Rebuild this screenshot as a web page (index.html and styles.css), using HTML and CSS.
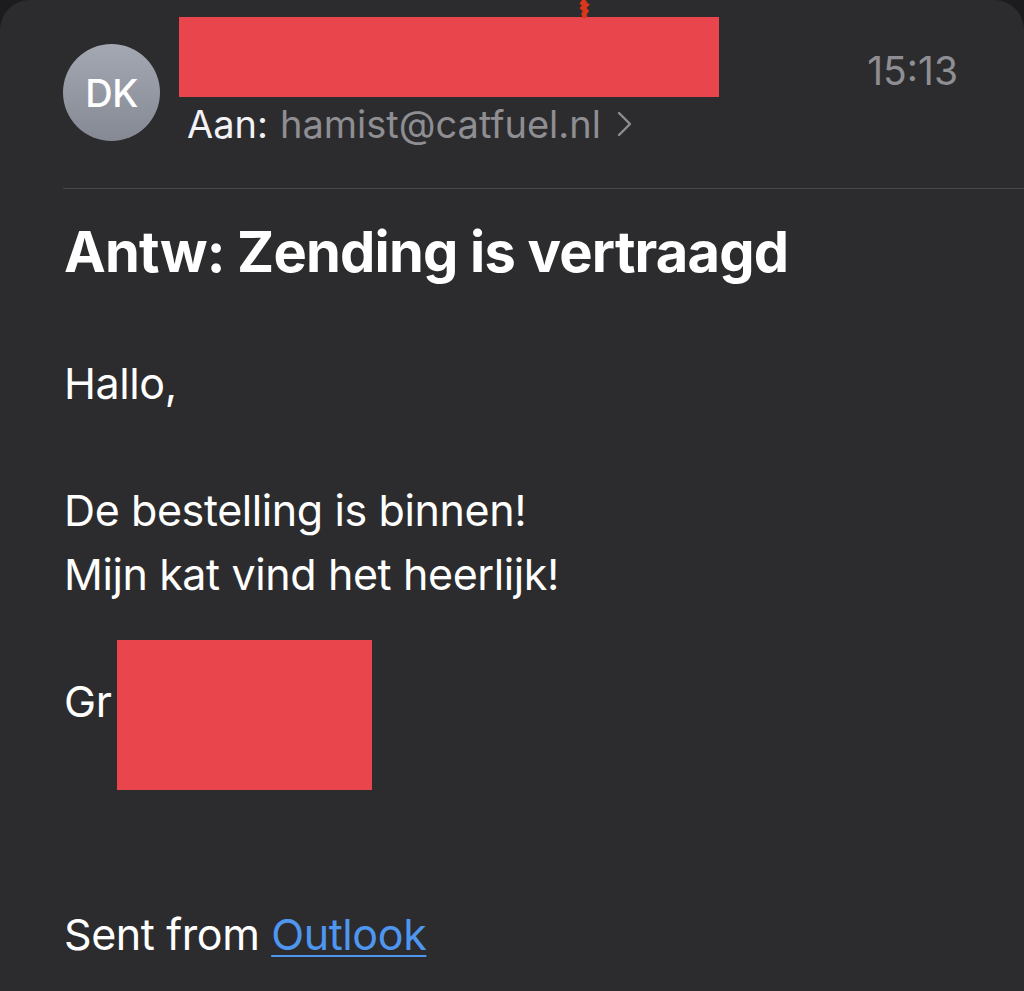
FILE: index.html
```html
<!DOCTYPE html>
<html>
<head>
  <meta charset="UTF-8">
  <title>Antw: Zending is vertraagd</title>
  <link rel="stylesheet" href="styles.css">
</head>
<body>

  <div class="mail">
    <svg class="scribble" width="14" height="18" viewBox="0 0 14 18">
      <path d="M7 0 L5 3 L8 5 L5 8 L8 11 L6 14 L7 18" stroke="#d8371c" stroke-width="5" fill="none"/>
    </svg>

    <div class="mail-header">
      <div class="avatar">DK</div>
      <div class="who">
        <div class="redact redact-sender"></div>
        <div class="to-line">
          <span class="to-label">Aan:</span>
          <span class="to-addr">hamist@catfuel.nl</span>
          <svg class="chevron" width="15" height="26" viewBox="0 0 15 26">
            <path d="M2 2 L13 13 L2 24" stroke="#8e8e93" stroke-width="2.4" fill="none" stroke-linecap="round" stroke-linejoin="round"/>
          </svg>
        </div>
      </div>
      <div class="time">15:13</div>
    </div>

    <h1 class="subject">Antw: Zending is vertraagd</h1>

    <div class="mail-body">
      <div class="line">Hallo,</div>
      <div class="line">&nbsp;</div>
      <div class="line">De bestelling is binnen!</div>
      <div class="line">Mijn kat vind het heerlijk!</div>
      <div class="line">&nbsp;</div>
      <div class="line">Gr <span class="redact redact-name"></span></div>
      <div class="line sent">Sent from <a href="#">Outlook</a></div>
    </div>
  </div>

</body>
</html>
```

FILE: styles.css
```css
body {
  background-color: #1c1c1e;
  color: #ffffff;
  font-family: "Inter", "Liberation Sans", sans-serif;
  margin: 0;
  padding: 0;
}
/* The mail card */
.mail {
  position: relative;
  background-color: #2c2c2e;
  border-radius: 30px 30px 0 0;
  min-height: 991px;
  overflow: hidden;
}
.scribble {
  position: absolute;
  left: 578px;
  top: 0;
}
/* Header with avatar, sender and time */
.mail-header {
  display: flex;
  align-items: flex-start;
  margin-left: 63px;
  padding: 17px 66px 0 0;
  height: 189px;
  box-sizing: border-box;
  border-bottom: 1px solid #48484a;
}
.avatar {
  width: 97px;
  height: 97px;
  margin-top: 27px;
  border-radius: 50%;
  background: linear-gradient(#a4a8b3, #858994);
  color: #ffffff;
  font-size: 38px;
  font-weight: 500;
  display: flex;
  align-items: center;
  justify-content: center;
  letter-spacing: -0.5px;
}
.who {
  margin-left: 19px;
  flex: 1;
}
.redact {
  background-color: #e8464c;
}
.redact-sender {
  width: 540px;
  height: 80px;
}
.to-line {
  display: flex;
  align-items: center;
  padding-left: 8px;
  height: 54px;
  font-size: 38px;
}
.to-label {
  color: #f2f2f7;
  margin-right: 12px;
}
.to-addr {
  color: #8e8e93;
}
.chevron {
  margin-left: 16px;
}
.time {
  color: #8e8e93;
  font-size: 39px;
  margin-top: 30px;
}
/* Subject */
.subject {
  margin: 0;
  padding: 23px 0 0 64px;
  font-size: 56px;
  font-weight: 700;
  line-height: 80px;
  letter-spacing: -0.8px;
}
/* Body text */
.mail-body {
  padding: 60px 0 0 64px;
  font-size: 43px;
  letter-spacing: -0.4px;
}
.line {
  line-height: 63.5px;
}
.redact-name {
  display: inline-block;
  width: 255px;
  height: 150px;
  vertical-align: middle;
  margin: -35px 0 -55px -6px;
}
.sent {
  margin-top: 168px;
}
.sent a {
  color: #4f96ee;
  text-decoration: underline;
  text-underline-offset: 5px;
  text-decoration-thickness: 2px;
}
```
